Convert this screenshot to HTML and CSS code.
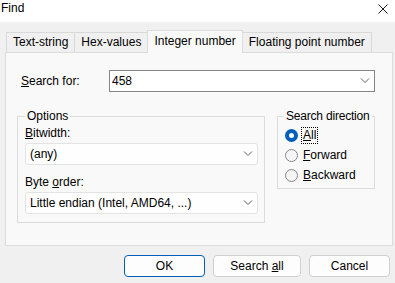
FILE: index.html
```html
<!DOCTYPE html>
<html lang="en">
  <head>
    <meta charset="UTF-8" />
    <title>Find</title>
    <link rel="stylesheet" href="styles.css">
  </head>
  <body class="body">
    <div class="titlebar">
      <span class="titlebar__title">Find</span>
      <svg class="titlebar__close" width="10" height="10" viewBox="0 0 10 10">
        <path d="M0.5 0.5 L9.5 9.5 M9.5 0.5 L0.5 9.5" stroke="#1a1a1a" stroke-width="1" fill="none" />
      </svg>
    </div>
    <div class="dialog">
      <ul class="tabs">
        <li class="tab">Text-string</li>
        <li class="tab">Hex-values</li>
        <li class="tab tab_active">Integer number</li>
        <li class="tab">Floating point number</li>
      </ul>
      <div class="panel">
        <div class="search">
          <label class="search__label"><u>S</u>earch for:</label>
          <div class="combo combo_edit">
            <span class="combo__text">458</span>
            <svg class="combo__arrow" width="10" height="6" viewBox="0 0 10 6">
              <path d="M1 0.5 L5 4.5 L9 0.5" stroke="#5f5f5f" fill="none" />
            </svg>
          </div>
        </div>
        <div class="groups">
          <fieldset class="group group_options">
            <legend class="group__title">Options</legend>
            <div class="field__label"><u>B</u>itwidth:</div>
            <div class="combo">
              <span class="combo__text">(any)</span>
              <svg class="combo__arrow" width="10" height="6" viewBox="0 0 10 6">
                <path d="M1 0.5 L5 4.5 L9 0.5" stroke="#5f5f5f" fill="none" />
              </svg>
            </div>
            <div class="field__label field__label_gap">Byte <u>o</u>rder:</div>
            <div class="combo">
              <span class="combo__text">Little endian (Intel, AMD64, ...)</span>
              <svg class="combo__arrow" width="10" height="6" viewBox="0 0 10 6">
                <path d="M1 0.5 L5 4.5 L9 0.5" stroke="#5f5f5f" fill="none" />
              </svg>
            </div>
          </fieldset>
          <fieldset class="group group_direction">
            <legend class="group__title">Search direction</legend>
            <div class="radio__row">
              <span class="radio radio_checked"></span>
              <span class="radio__label radio__label_focus"><u>A</u>ll</span>
            </div>
            <div class="radio__row">
              <span class="radio"></span>
              <span class="radio__label"><u>F</u>orward</span>
            </div>
            <div class="radio__row">
              <span class="radio"></span>
              <span class="radio__label"><u>B</u>ackward</span>
            </div>
          </fieldset>
        </div>
      </div>
      <div class="buttons">
        <button class="button button_default">OK</button>
        <button class="button button_wide">Search <u>a</u>ll</button>
        <button class="button">Cancel</button>
      </div>
    </div>
  </body>
</html>
```

FILE: styles.css
```css
.body {
  margin: 0;
  width: 395px;
  height: 283px;
  overflow: hidden;
  background-color: #f0f0f0;
  font-family: "Liberation Sans", Arial, sans-serif;
  font-size: 12px;
  color: #000;
}
.titlebar {
  display: flex;
  justify-content: space-between;
  align-items: flex-start;
  height: 22px;
  background-color: #fff;
  line-height: 16px;
}
.titlebar__title {
  padding-left: 1px;
}
.titlebar__close {
  margin-top: 4px;
  margin-right: 7px;
}
.dialog {
  padding-top: 8px;
}
.tabs {
  display: flex;
  align-items: flex-end;
  list-style: none;
  margin: 0 0 0 6px;
  padding: 0;
}
.tab {
  box-sizing: border-box;
  height: 20px;
  line-height: 19px;
  padding: 0 6px;
  border: 1px solid #d9d9d9;
  border-bottom: none;
  background-color: #f0f0f0;
  margin-left: -1px;
}
.tab:first-child {
  margin-left: 0;
}
.tab_active {
  position: relative;
  z-index: 1;
  height: 23px;
  line-height: 21px;
  margin-bottom: -1px;
  background-color: #f9f9f9;
  border-color: #dcdcdc;
}
.panel {
  box-sizing: border-box;
  height: 194px;
  margin: 0 2px 0 5px;
  padding: 17px 17px 0 11px;
  border: 1px solid #dcdcdc;
  background-color: #f9f9f9;
}
.search {
  display: flex;
  align-items: center;
}
.search__label {
  box-sizing: border-box;
  width: 92px;
  padding-left: 4px;
}
.combo {
  box-sizing: border-box;
  display: flex;
  align-items: center;
  justify-content: space-between;
  height: 22px;
  padding: 0 4px 0 4px;
  border: 1px solid #e3e3e3;
  border-radius: 3px;
  background-color: #fefefe;
}
.combo_edit {
  flex: 1;
  padding-left: 2px;
  border-color: #858585;
  border-radius: 0;
  background-color: #fff;
}
.combo__arrow {
  flex-shrink: 0;
}
.groups {
  display: flex;
  align-items: flex-start;
  gap: 12px;
  margin-top: 16px;
}
.group {
  box-sizing: border-box;
  min-width: 0;
  margin: 0;
  border: 1px solid #dcdcdc;
}
.group__title {
  padding: 0 2px;
  line-height: 16px;
  white-space: nowrap;
}
.group_options {
  width: 248px;
  padding: 0 6px 8px 7px;
}
.group_direction {
  width: 98px;
  padding: 1px 0 3px 6px;
}
.group_direction .group__title {
  letter-spacing: -0.2px;
}
.field__label {
  margin-top: 1px;
  margin-bottom: 2px;
  line-height: 16px;
}
.field__label_gap {
  margin-top: 9px;
}
.radio__row {
  display: flex;
  align-items: center;
  height: 20px;
}
.radio {
  box-sizing: border-box;
  width: 13px;
  height: 13px;
  margin-left: 1px;
  margin-right: 4px;
  border: 1px solid #878787;
  border-radius: 50%;
  background-color: #f5f5f5;
}
.radio_checked {
  border: 4px solid #005fb8;
  background-color: #fff;
}
.radio__label {
  padding: 0 1px;
  line-height: 15px;
}
.radio__label_focus {
  outline: 1px dotted #000;
}
.buttons {
  display: flex;
  justify-content: flex-end;
  gap: 8px;
  margin-top: 9px;
  padding-right: 5px;
}
.button {
  box-sizing: border-box;
  width: 81px;
  height: 22px;
  padding: 0;
  border: 1px solid #d0d0d0;
  border-radius: 4px;
  background-color: #fdfdfd;
  font-family: inherit;
  font-size: 12px;
  color: #000;
}
.button_wide {
  width: 88px;
}
.button_default {
  border-color: #005fb8;
}
```
